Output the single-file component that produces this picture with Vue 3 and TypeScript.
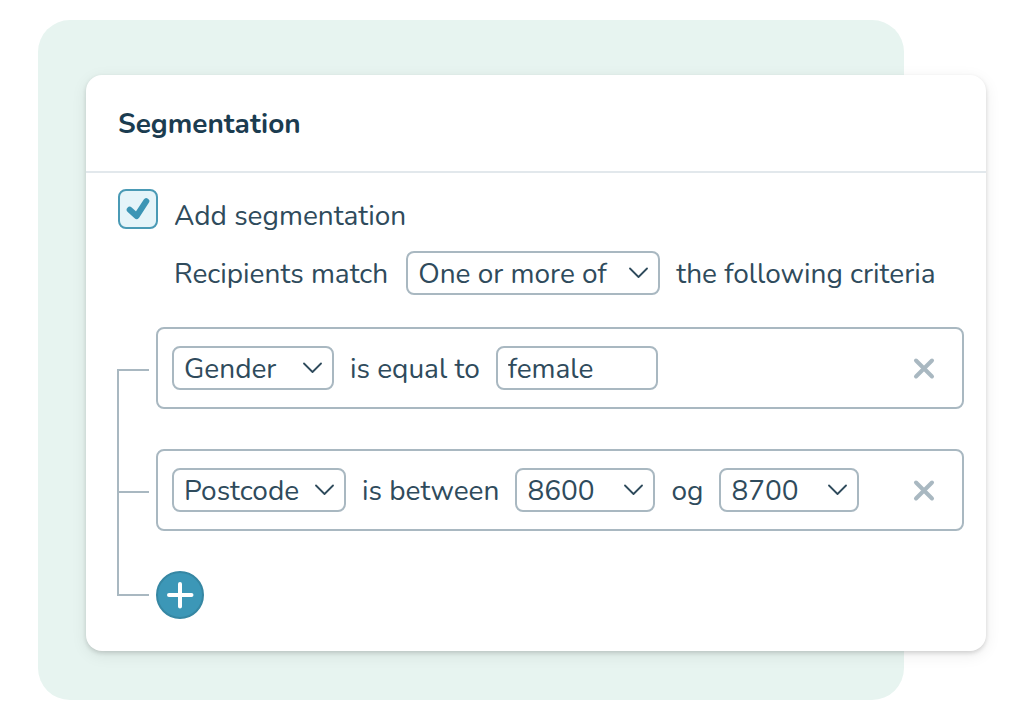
<script setup lang="ts">
import { ref } from 'vue'

const enabled = ref(true)
const matchMode = ref('One or more of')
const matchModes = ['One or more of', 'All of', 'None of']

const fields = ['Gender', 'Postcode']
const firstField = ref('Gender')
const secondField = ref('Postcode')
const gender = ref('female')

const postcodes = ['8600', '8700']
const fromCode = ref('8600')
const toCode = ref('8700')
</script>

<template>
  <main class="backdrop">
    <section class="card" aria-labelledby="title">
      <header class="card-header">
        <h1 id="title">Segmentation</h1>
      </header>

      <div class="card-body">
        <div class="toggle">
          <span class="check">
            <input id="enabled" v-model="enabled" type="checkbox" />
            <svg v-if="enabled" viewBox="0 0 40 40" aria-hidden="true">
              <path d="M11.700 20.800L18.600 27L28.300 12.200" />
            </svg>
          </span>
          <label for="enabled">Add segmentation</label>
        </div>

        <div class="match">
          <label class="phrase" for="mode">Recipients match</label>
          <span class="select mode">
            <select id="mode" v-model="matchMode">
              <option v-for="mode in matchModes" :key="mode">{{ mode }}</option>
            </select>
            <svg viewBox="0 0 20 12" aria-hidden="true"><path d="M2 1.500L10.500 10L19 1.500" /></svg>
          </span>
          <span class="phrase">the following criteria</span>
        </div>

        <div class="criteria">
          <div class="tree" aria-hidden="true">
            <span class="branch first"></span>
            <span class="branch last"></span>
          </div>

          <div class="rules">
            <div class="rule">
              <span class="select gender">
                <select v-model="firstField" aria-label="First field">
                  <option v-for="field in fields" :key="field">{{ field }}</option>
                </select>
                <svg viewBox="0 0 20 12" aria-hidden="true"><path d="M2 1.500L10.500 10L19 1.500" /></svg>
              </span>
              <label class="phrase" for="gender">is equal to</label>
              <input id="gender" v-model="gender" class="text" type="text" />
              <button class="remove" type="button" aria-label="Remove first rule">
                <svg viewBox="0 0 20 20" aria-hidden="true"><path d="M2 2.500L18 18.500M18 2.500L2 18.500" /></svg>
              </button>
            </div>

            <div class="rule">
              <span class="select postcode">
                <select v-model="secondField" aria-label="Second field">
                  <option v-for="field in fields" :key="field">{{ field }}</option>
                </select>
                <svg viewBox="0 0 20 12" aria-hidden="true"><path d="M2 1.500L10.500 10L19 1.500" /></svg>
              </span>
              <label class="phrase" for="from">is between</label>
              <span class="select code">
                <select id="from" v-model="fromCode">
                  <option v-for="code in postcodes" :key="code">{{ code }}</option>
                </select>
                <svg viewBox="0 0 20 12" aria-hidden="true"><path d="M2 1.500L10.500 10L19 1.500" /></svg>
              </span>
              <label class="phrase" for="to">og</label>
              <span class="select code">
                <select id="to" v-model="toCode">
                  <option v-for="code in postcodes" :key="code">{{ code }}</option>
                </select>
                <svg viewBox="0 0 20 12" aria-hidden="true"><path d="M2 1.500L10.500 10L19 1.500" /></svg>
              </span>
              <button class="remove" type="button" aria-label="Remove second rule">
                <svg viewBox="0 0 20 20" aria-hidden="true"><path d="M2 2.500L18 18.500M18 2.500L2 18.500" /></svg>
              </button>
            </div>

            <button class="add" type="button" aria-label="Add rule">
              <svg viewBox="0 0 48 48" aria-hidden="true"><path d="M24 13V35.500M13 24H35.500" /></svg>
            </button>
          </div>
        </div>
      </div>
    </section>
  </main>
</template>

<style>
body {
  margin: 0;
  background: #fff;
}
</style>

<style scoped>
* {
  box-sizing: border-box;
}

.backdrop {
  display: flow-root;
  margin: 20px 120px 20px 38px;
  padding: 55px 0 49px 48px;
  border-radius: 32px;
  background: #e7f4f0;
  color: #2f4b5c;
  font: 28px/36px Nunito, Lato, sans-serif;
}

.card {
  margin-right: -82px;
  border-radius: 16px;
  background: #fff;
  box-shadow: 0 2px 4px rgb(0 0 0 / 14%), 0 4px 16px rgb(0 0 0 / 8%);
}

.card-header {
  padding: 31px 32px 29px;
  border-bottom: 2px solid #e2e8ec;
}

h1 {
  margin: 0;
  color: #1b3c50;
  font-size: 28px;
  font-weight: 700;
  line-height: 36px;
}

.card-body {
  padding: 16px 22px 32px 32px;
}

.toggle {
  display: flex;
  gap: 16px;
  height: 44px;
}

.toggle label {
  padding-top: 9px;
}

.check {
  position: relative;
  width: 40px;
  height: 40px;
}

.check input {
  display: block;
  width: 40px;
  height: 40px;
  margin: 0;
  appearance: none;
  border: 2px solid #4a9ab5;
  border-radius: 8px;
  background: #e5f4f9;
}

.check svg {
  position: absolute;
  inset: 0;
  stroke: #3c95b5;
  stroke-width: 6;
  stroke-linejoin: round;
}

svg {
  fill: none;
  stroke-linecap: round;
  pointer-events: none;
}

.match {
  display: flex;
  align-items: center;
  gap: 16px;
  margin: 18px 0 32px 56px;
  white-space: nowrap;
}

.match label {
  padding-right: 2px;
}

.phrase {
  padding-top: 2px;
}

.select {
  position: relative;
  flex: none;
}

select,
.text {
  display: block;
  width: 100%;
  height: 44px;
  margin: 0;
  padding: 2px 10px 0;
  appearance: none;
  border: 2px solid #a9b8c1;
  border-radius: 8px;
  background: #fff;
  color: inherit;
  font: inherit;
}

.select svg {
  position: absolute;
  top: 16px;
  right: 12px;
  width: 20px;
  height: 12px;
  stroke: #2f4b5c;
  stroke-width: 1.8;
  stroke-linejoin: round;
}

.mode {
  width: 254px;
}

.gender,
.text {
  width: 162px;
}

.postcode {
  width: 174px;
}

.code {
  width: 140px;
}

.criteria {
  display: flex;
  gap: 7px;
  margin-left: -1px;
}

.tree {
  display: flex;
  flex-direction: column;
  width: 32px;
  padding: 42px 0 23px;
}

.branch {
  border: 0 solid #a9b8c1;
  border-left-width: 2px;
}

.first {
  height: 122px;
  border-top-width: 2px;
}

.last {
  flex: 1;
  border-top-width: 2px;
  border-bottom-width: 2px;
}

.rules {
  display: flex;
  flex: 1;
  flex-direction: column;
  gap: 40px;
}

.rule {
  display: flex;
  align-items: center;
  gap: 16px;
  padding: 17px 14px;
  border: 2px solid #a9b8c1;
  border-radius: 8px;
  white-space: nowrap;
}

button {
  padding: 0;
  border: 0;
  background: none;
  cursor: pointer;
}

.remove {
  display: grid;
  place-items: center;
  width: 48px;
  height: 44px;
  margin-left: auto;
}

.remove svg {
  width: 20px;
  height: 20px;
  overflow: visible;
  stroke: #a9b8c1;
  stroke-width: 4;
}

.add {
  width: 48px;
  height: 48px;
  border: 2px solid #3687a3;
  border-radius: 50%;
  background: #3c97b7;
}

.add svg {
  display: block;
  width: 48px;
  height: 48px;
  margin: -2px;
  stroke: #fff;
  stroke-width: 4;
}
</style>
